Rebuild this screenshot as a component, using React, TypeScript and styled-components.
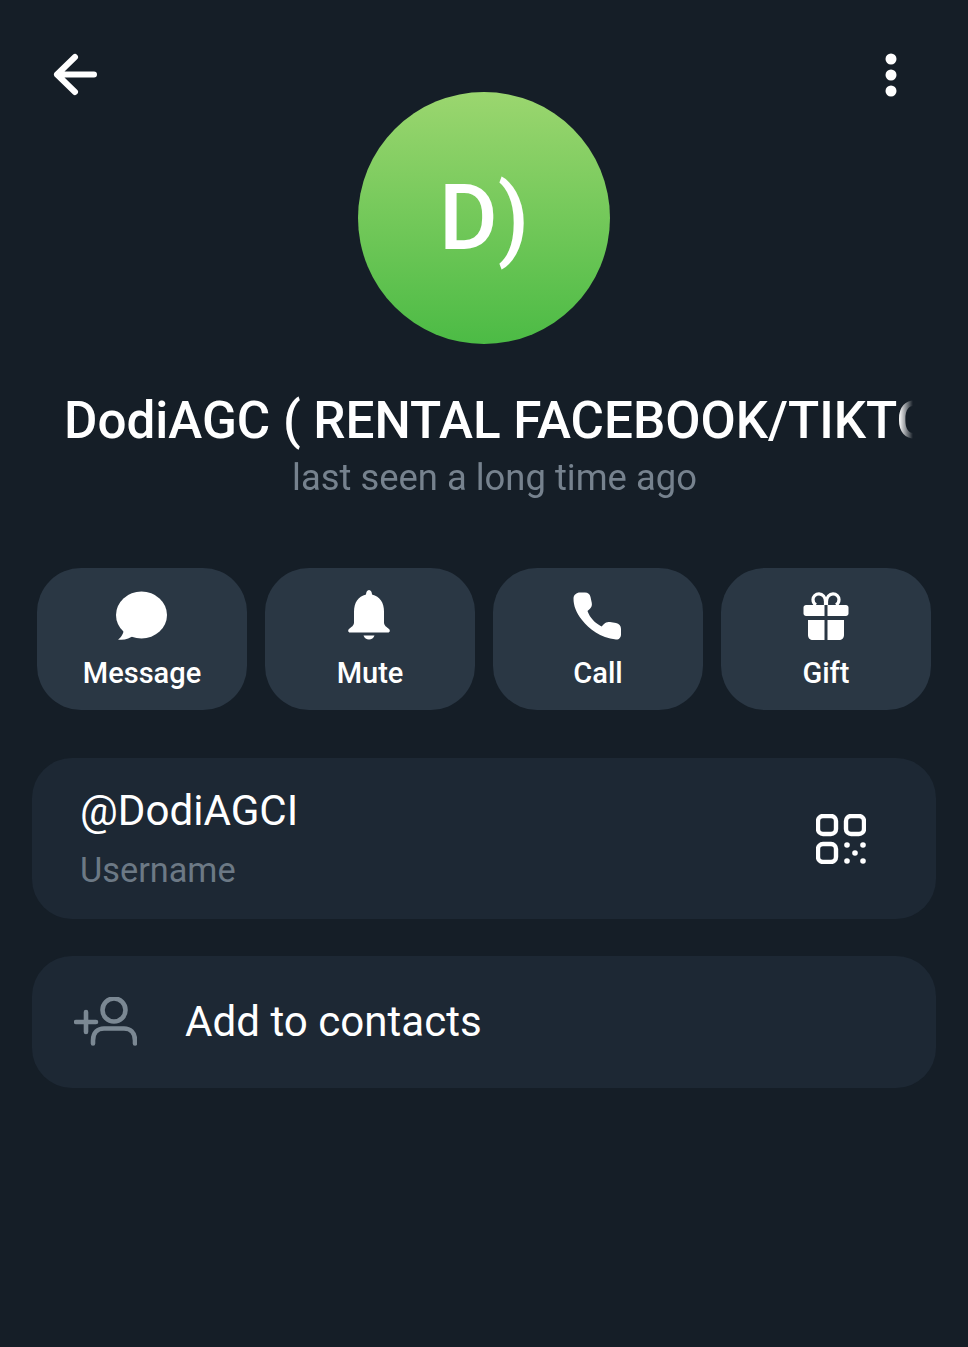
import React from "react";
import styled, { createGlobalStyle } from "styled-components";

const Global = createGlobalStyle`
  html, body { margin: 0; padding: 0; background: #151e27; }
  * { box-sizing: border-box; }
`;

const Page = styled.div`
  width: 968px;
  height: 1347px;
  background: #151e27;
  font-family: Roboto, "Noto Sans", sans-serif;
  color: #fff;
  display: flex;
  flex-direction: column;
  overflow: hidden;
`;

const TopBar = styled.header`
  height: 92px;
  padding: 50px 52px 0 49px;
  display: flex;
  justify-content: space-between;
  align-items: flex-start;
`;

const IconSlot = styled.div`
  width: 50px;
  height: 50px;
  display: flex;
  align-items: center;
  justify-content: center;
`;

const Avatar = styled.div`
  width: 252px;
  height: 252px;
  padding-top: 2px;
  border-radius: 50%;
  align-self: center;
  background: linear-gradient(180deg, #9bd66f 0%, #4cbb45 100%);
  display: flex;
  align-items: center;
  justify-content: center;
  font-size: 90px;
  font-weight: 500;
  line-height: 1;
`;

const Title = styled.h1`
  margin: 47px 55px 0 64px;
  font-size: 51.2px;
  font-weight: 500;
  line-height: 60px;
  white-space: nowrap;
  overflow: hidden;
  filter: blur(0.4px);
  -webkit-mask-image: linear-gradient(90deg, #000 calc(100% - 14px), transparent 100%);
  mask-image: linear-gradient(90deg, #000 calc(100% - 14px), transparent 100%);
`;

const Status = styled.div`
  margin-top: -1px;
  padding-left: 21px;
  text-align: center;
  font-size: 36.4px;
  line-height: 56px;
  color: #76828e;
  filter: blur(0.4px);
`;

const Actions = styled.div`
  margin-top: 62px;
  padding: 0 37px;
  display: grid;
  grid-template-columns: repeat(4, 1fr);
  gap: 18px;
`;

const ActionButton = styled.div`
  height: 142px;
  border-radius: 44px;
  background: #2a3744;
  display: flex;
  flex-direction: column;
  align-items: center;
  padding-top: 21px;
`;

const ActionGlyph = styled.div`
  height: 54px;
  display: flex;
  align-items: center;
  justify-content: center;
`;

const ActionLabel = styled.div`
  margin-top: 12px;
  font-size: 29px;
  font-weight: 500;
  line-height: 36px;
`;

const Card = styled.section<{ $top: number; $height: number }>`
  margin: ${(p) => p.$top}px 32px 0;
  height: ${(p) => p.$height}px;
  border-radius: 40px;
  background: #1d2834;
  display: flex;
  align-items: center;
`;

const UserCard = styled(Card)`
  padding: 0 70px 0 48px;
  justify-content: space-between;
`;

const AddCard = styled(Card)`
  padding-left: 42px;
  gap: 48px;
`;

const UserBlock = styled.div`
  margin-top: -1px;
`;

const UserName = styled.div`
  font-size: 42.1px;
  line-height: 50px;
`;

const UserHint = styled.div`
  margin-top: 14px;
  font-size: 34.3px;
  line-height: 40px;
  color: #6c7985;
`;

const AddLabel = styled.div`
  font-size: 42.1px;
  line-height: 50px;
`;

const Back = () => (
  <svg width="50" height="50" viewBox="0 0 50 50" fill="none" stroke="#fff" strokeWidth="6" strokeLinecap="round" strokeLinejoin="round">
    <path d="M8 24.500H45M26 7 8 24.500 26 42" />
  </svg>
);

const More = () => (
  <svg width="12" height="44" viewBox="0 0 12 44" fill="#fff">
    <circle cx="6" cy="6" r="5.500" />
    <circle cx="6" cy="22" r="5.500" />
    <circle cx="6" cy="38" r="5.500" />
  </svg>
);

const Bubble = () => (
  <svg width="52" height="50" viewBox="0 0 52 50" fill="#fff">
    <ellipse cx="25.500" cy="24" rx="25.500" ry="23.500" />
    <path d="M8 37 C8 42 5 47 2 48.500 C8 49.500 14 47.500 18 44Z" />
  </svg>
);

const Bell = () => (
  <svg width="44" height="52" viewBox="0 0 44 52" fill="#fff">
    <path d="M18 4.500C18 2.500 19 0 21 0s3 2.500 3 4.500c8 1.800 12 8.500 12 17v11c0 3 2.500 4.500 5 6.500 1.500 1.500.8 3.500-1.200 3.500H2.200c-2 0-2.700-2-1.200-3.500 2.500-2 5-3.500 5-6.500v-11c0-8.500 4-15.200 12-17z" />
    <path d="M15.500 45.500h11c-.8 2.500-3 4-5.500 4s-4.700-1.500-5.500-4z" />
  </svg>
);

const Phone = () => (
  <svg width="50" height="50" viewBox="0 0 50 50" fill="#fff">
    <path d="M7 1.500c-3.500 0-6.500 2.500-6.500 6 0 7 2.500 14 8.500 21.500C16.500 38.500 27 46.500 43 48.500c3 .3 5-2 5-5v-5.500c0-3.500-2-5.500-5-6l-6-1c-2.500-.4-4.500.3-6 2l-2.500 2.500C22 32 17 27 14.500 20l2.500-2.200c1.500-1.500 2.200-3.500 1.800-5.800l-1.300-6c-.6-3-2.500-4.500-5.500-4.500z" />
  </svg>
);

const Gift = () => (
  <svg width="46" height="48" viewBox="0 0 46 48" fill="#fff">
    <path d="M22.500 13V9.500C22.500 5 19.500 1.800 16 1.800S10 4.500 10 7.500c0 2.500 1.200 4.500 3 5.500M23.500 13V9.500C23.500 5 26.500 1.800 30 1.800S36 4.500 36 7.500c0 2.500-1.200 4.500-3 5.500" fill="none" stroke="#fff" strokeWidth="3.200" />
    <path d="M3 13h18.500v11H3c-1.300 0-2.500-1-2.500-2.500v-6C.5 14 1.700 13 3 13zM24.500 13H43c1.300 0 2.500 1 2.500 2.500v6c0 1.500-1.200 2.500-2.500 2.500H24.500z" />
    <path d="M5 28h16.500v20H10c-3 0-5-2-5-5zM24.500 28H41v15c0 3-2 5-5 5H24.500z" />
  </svg>
);

const Qr = () => (
  <svg width="50" height="50" viewBox="0 0 50 50" fill="none" stroke="#fff" strokeWidth="4.400">
    <rect x="2" y="2" width="18" height="18" rx="5" />
    <rect x="30" y="2" width="18" height="18" rx="5" />
    <rect x="2" y="30" width="18" height="18" rx="5" />
    <g fill="#fff" stroke="none">
      <circle cx="31" cy="31" r="2.800" />
      <circle cx="47" cy="31" r="2.800" />
      <circle cx="39" cy="39" r="2.800" />
      <circle cx="31" cy="47" r="2.800" />
      <circle cx="47" cy="47" r="2.800" />
    </g>
  </svg>
);

const AddPerson = () => (
  <svg width="63" height="50" viewBox="0 0 63 50" fill="none" stroke="#7b8893" strokeWidth="4.600" strokeLinecap="round">
    <circle cx="40" cy="13" r="11.500" />
    <path d="M19 46.500v-3c0-8 5-12 11-12h20c6 0 11 4 11 12v3" />
    <path d="M2 25h20M12 15v20" />
  </svg>
);

const actions = [
  { label: "Message", icon: <Bubble /> },
  { label: "Mute", icon: <Bell /> },
  { label: "Call", icon: <Phone /> },
  { label: "Gift", icon: <Gift /> },
];

export default function App() {
  return (
    <Page>
      <Global />
      <TopBar>
        <IconSlot><Back /></IconSlot>
        <IconSlot><More /></IconSlot>
      </TopBar>
      <Avatar>D)</Avatar>
      <Title>DodiAGC ( RENTAL FACEBOOK/TIKTOK )</Title>
      <Status>last seen a long time ago</Status>
      <Actions>
        {actions.map((a) => (
          <ActionButton key={a.label}>
            <ActionGlyph>{a.icon}</ActionGlyph>
            <ActionLabel>{a.label}</ActionLabel>
          </ActionButton>
        ))}
      </Actions>
      <UserCard $top={48} $height={161}>
        <UserBlock>
          <UserName>@DodiAGCI</UserName>
          <UserHint>Username</UserHint>
        </UserBlock>
        <Qr />
      </UserCard>
      <AddCard $top={37} $height={132}>
        <AddPerson />
        <AddLabel>Add to contacts</AddLabel>
      </AddCard>
    </Page>
  );
}
